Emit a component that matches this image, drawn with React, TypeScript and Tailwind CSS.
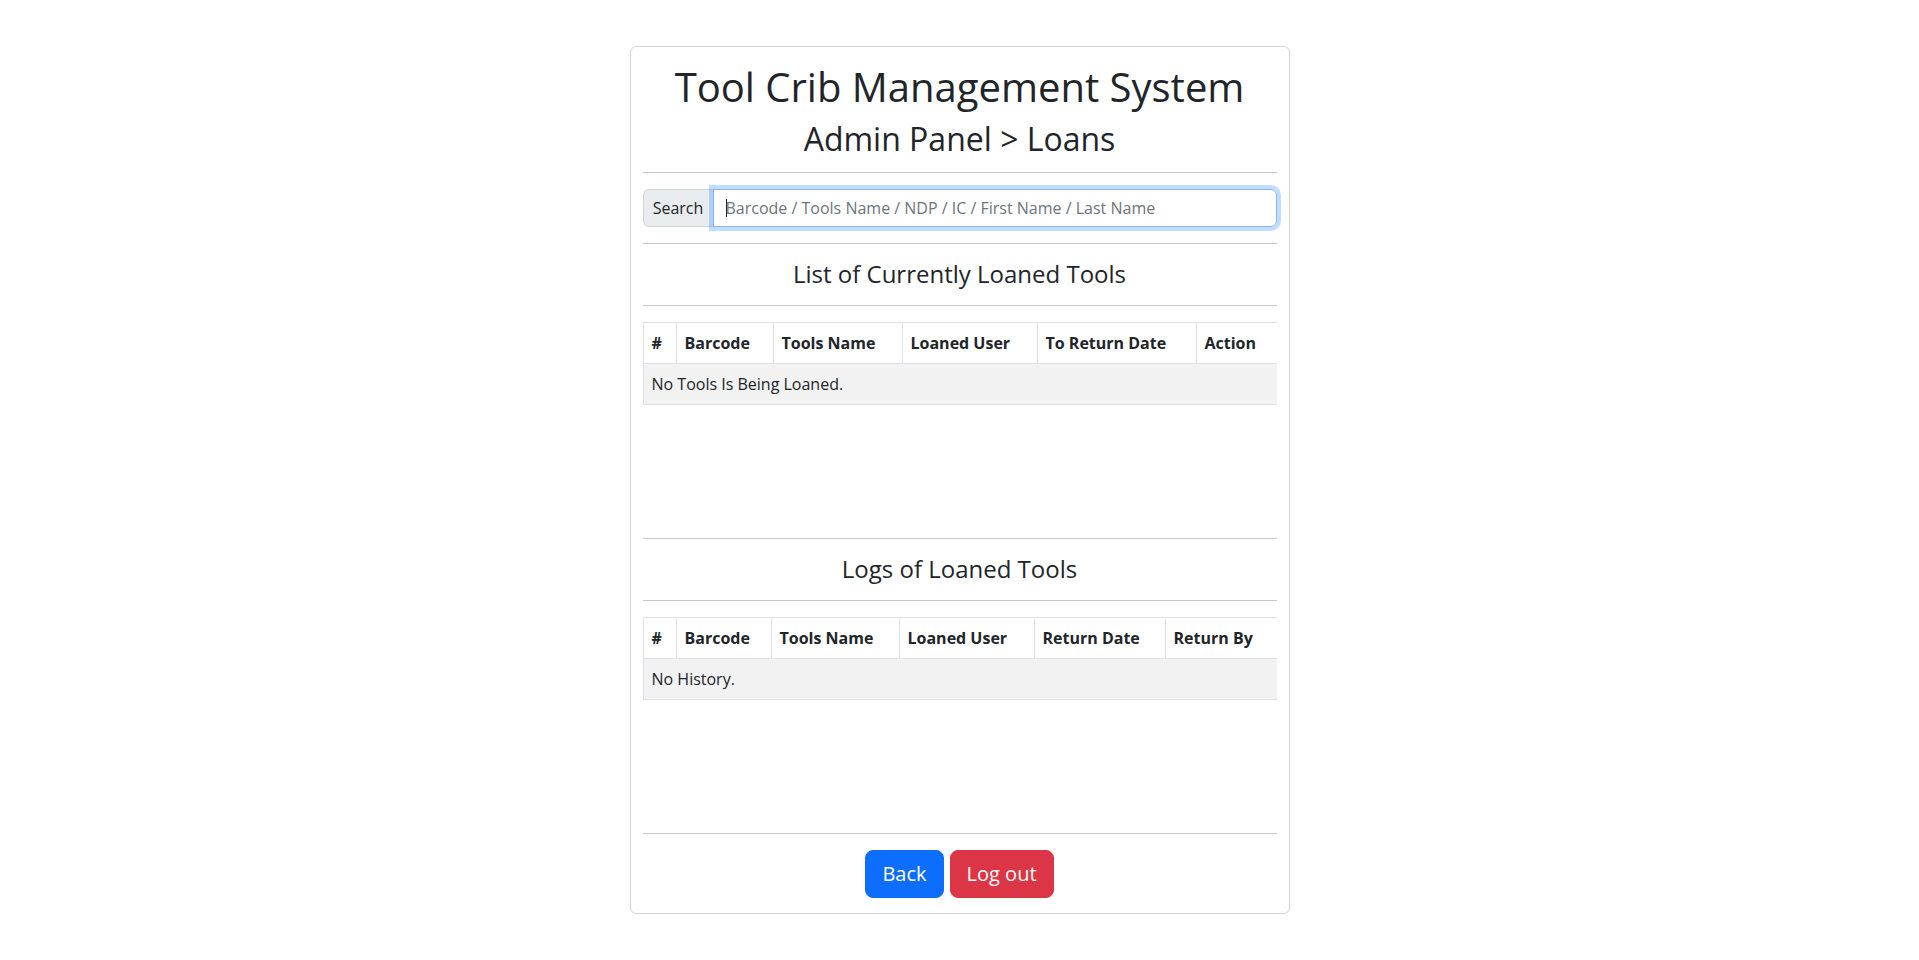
import React from 'react';

type Col = { label: string; w: string };

const loanCols: Col[] = [
  { label: '#', w: 'w-[33px]' },
  { label: 'Barcode', w: 'w-[97px]' },
  { label: 'Tools Name', w: 'w-[129px]' },
  { label: 'Loaned User', w: 'w-[135px]' },
  { label: 'To Return Date', w: 'w-[159px]' },
  { label: 'Action', w: 'w-[81px]' },
];

const logCols: Col[] = [
  { label: '#', w: 'w-[33px]' },
  { label: 'Barcode', w: 'w-[95px]' },
  { label: 'Tools Name', w: 'w-[128px]' },
  { label: 'Loaned User', w: 'w-[135px]' },
  { label: 'Return Date', w: 'w-[131px]' },
  { label: 'Return By', w: 'w-[112px]' },
];

function Divider() {
  return <hr className="my-4 border-0 border-t border-[#c8c9ca]" />;
}

function DataTable({ cols, empty }: { cols: Col[]; empty: string }) {
  return (
    <div className="h-[200px] overflow-y-auto">
      <table className="w-full table-fixed border-collapse text-[16px] leading-6">
        <thead>
          <tr className="bg-white">
            {cols.map((c) => (
              <th key={c.label} className={`${c.w} border border-[#dee2e6] p-2 text-left font-bold`}>
                {c.label}
              </th>
            ))}
          </tr>
        </thead>
        <tbody>
          <tr className="bg-[#f2f2f2]">
            <td colSpan={cols.length} className="border border-[#dee2e6] p-2">
              {empty}
            </td>
          </tr>
        </tbody>
      </table>
    </div>
  );
}

export default function App() {
  return (
    <div className="min-h-screen bg-white font-['Open_Sans',sans-serif] text-[#212529]">
      <div className="flex justify-center pt-[46px]">
        <div className="w-[660px] rounded-[6px] border border-[#d3d4d5] p-3">
          <h1 className="mt-[4px] mb-[9px] text-center text-[40px] font-normal leading-[1.2]">Tool Crib Management System</h1>
          <h2 className="text-center text-[32px] font-normal leading-[1.2]">Admin Panel &gt; Loans</h2>
          <hr className="mt-[14px] mb-4 border-0 border-t border-[#c8c9ca]" />

          <div className="flex h-[38px]">
            <span className="flex w-[71px] items-center justify-center rounded-l-[6px] border border-[#ced4da] bg-[#e9ecef] text-[16px]">
              Search
            </span>
            <div className="relative z-10 -ml-px flex-1">
              <input
                type="text"
                placeholder="Barcode / Tools Name / NDP / IC / First Name / Last Name"
                className="h-full w-full rounded-r-[6px] border border-[#86b7fe] px-3 text-[16px] shadow-[0_0_0_4px_rgba(13,110,253,0.25)] outline-none placeholder:text-[#6c757d]"
              />
              <span className="absolute left-[13px] top-[10px] h-[18px] w-px bg-[#212529]" />
            </div>
          </div>

          <Divider />
          <h4 className="text-center text-[24px] font-normal leading-[1.2]">List of Currently Loaned Tools</h4>
          <Divider />
          <DataTable cols={loanCols} empty="No Tools Is Being Loaned." />

          <Divider />
          <h4 className="text-center text-[24px] font-normal leading-[1.2]">Logs of Loaned Tools</h4>
          <Divider />
          <DataTable cols={logCols} empty="No History." />

          <Divider />
          <div className="mb-[3px] flex justify-center gap-[6px]">
            <button className="rounded-[8px] border border-[#0d6efd] bg-[#0d6efd] px-4 py-2 text-[20px] leading-[30px] text-white">
              Back
            </button>
            <button className="rounded-[8px] border border-[#dc3545] bg-[#dc3545] px-4 py-2 text-[20px] leading-[30px] text-white">
              Log out
            </button>
          </div>
        </div>
      </div>
    </div>
  );
}
